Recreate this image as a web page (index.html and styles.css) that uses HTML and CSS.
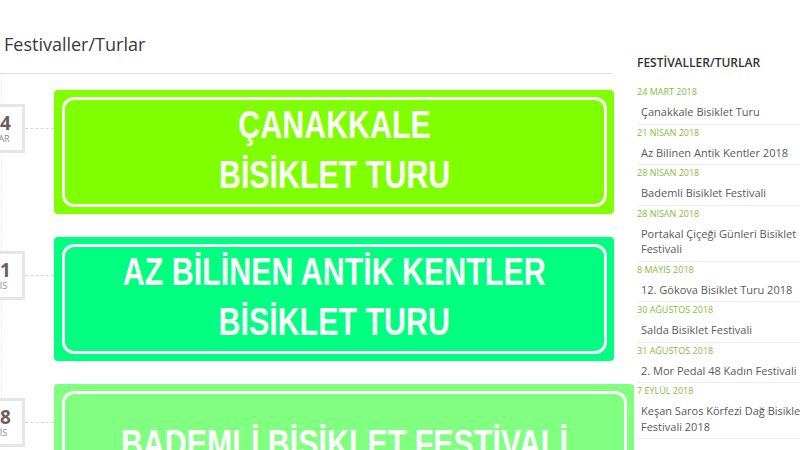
FILE: index.html
```html
<!DOCTYPE html>
<html lang="tr">
<head>
<meta charset="utf-8">
<title>Festivaller/Turlar</title>
<link rel="stylesheet" href="styles.css">
</head>
<body>
<div class="page">
  <main class="main">
    <h1 class="page-title">Festivaller/Turlar</h1>
    <div class="timeline">
      <div class="row">
        <div class="date"><span class="day">24</span><span class="mon">MAR</span></div>
        <div class="connector"></div>
        <div class="card card-lime"><div class="frame"><div class="label">ÇANAKKALE<br>BİSİKLET TURU</div></div></div>
      </div>
      <div class="row">
        <div class="date"><span class="day">21</span><span class="mon">NİS</span></div>
        <div class="connector"></div>
        <div class="card card-spring"><div class="frame"><div class="label">AZ BİLİNEN ANTİK KENTLER<br>BİSİKLET TURU</div></div></div>
      </div>
      <div class="row">
        <div class="date"><span class="day">28</span><span class="mon">NİS</span></div>
        <div class="connector"></div>
        <div class="card card-mint"><div class="frame"><div class="label">BADEMLİ BİSİKLET FESTİVALİ</div></div></div>
      </div>
    </div>
  </main>
  <aside class="sidebar">
    <h2 class="side-title">FESTİVALLER/TURLAR</h2>
    <ul class="events">
      <li class="event"><div class="ev-date">24 MART 2018</div><div class="ev-name">Çanakkale Bisiklet Turu</div></li>
      <li class="event"><div class="ev-date">21 NİSAN 2018</div><div class="ev-name">Az Bilinen Antik Kentler 2018</div></li>
      <li class="event"><div class="ev-date">28 NİSAN 2018</div><div class="ev-name">Bademli Bisiklet Festivali</div></li>
      <li class="event"><div class="ev-date">28 NİSAN 2018</div><div class="ev-name">Portakal Çiçeği Günleri Bisiklet Festivali</div></li>
      <li class="event"><div class="ev-date">8 MAYIS 2018</div><div class="ev-name">12. Gökova Bisiklet Turu 2018</div></li>
      <li class="event"><div class="ev-date">30 AĞUSTOS 2018</div><div class="ev-name">Salda Bisiklet Festivali</div></li>
      <li class="event"><div class="ev-date">31 AĞUSTOS 2018</div><div class="ev-name">2. Mor Pedal 48 Kadın Festivali</div></li>
      <li class="event"><div class="ev-date">7 EYLÜL 2018</div><div class="ev-name">Keşan Saros Körfezi Dağ Bisikleti Festivali 2018</div></li>
    </ul>
  </aside>
</div>
</body>
</html>
```

FILE: styles.css
```css
html, body {
  margin: 0;
  padding: 0;
  overflow: hidden;
  background: #fff;
}
body {
  font-family: "Open Sans", "Noto Sans", sans-serif;
  color: #444;
}
.page {
  display: flex;
  align-items: flex-start;
  width: 840px;
}
.main {
  flex: none;
  width: 614px;
}
.page-title {
  margin: 0 2px 0 0;
  padding: 32px 0 17px 4px;
  font-size: 18px;
  line-height: 24px;
  font-weight: 400;
  color: #3a3a3a;
  border-bottom: 1px solid #dcdcdc;
}
.timeline {
  margin-left: 1px;
  border-left: 1px dashed #ececec;
  padding-top: 16px;
}
.row {
  display: flex;
  align-items: flex-start;
  margin-bottom: 23px;
}
.date {
  flex: none;
  box-sizing: border-box;
  width: 50px;
  height: 49px;
  margin-left: -27px;
  margin-top: 14px;
  border: 3px solid #e6e6e6;
  background: #fff;
  display: flex;
  flex-direction: column;
  align-items: center;
  padding-top: 6px;
}
.day {
  font-size: 19px;
  line-height: 20px;
  font-weight: 700;
  color: #6f5d5d;
}
.mon {
  font-size: 9px;
  line-height: 12px;
  color: #8f8a96;
}
.connector {
  flex: none;
  width: 29px;
  margin-top: 38px;
  border-top: 1px dashed #d8d8d8;
}
.card {
  flex: 1;
  height: 124px;
  box-sizing: border-box;
  padding: 7px 7px 7px 8px;
  border-radius: 4px;
}
.card-lime { background: #80ff00; }
.card-spring { background: #00ff80; }
.card-mint { background: #80ff80; }
.frame {
  box-sizing: border-box;
  height: 100%;
  border: 3px solid #fff;
  border-radius: 12px;
  display: flex;
  align-items: center;
  justify-content: center;
  padding-bottom: 4px;
}
.label {
  font-family: "Liberation Sans", Arial, sans-serif;
  font-weight: 700;
  font-size: 38px;
  line-height: 50px;
  color: #fff;
  text-align: center;
  white-space: nowrap;
  transform: scaleX(0.8);
}
.sidebar {
  flex: none;
  width: 180px;
  margin-left: 23px;
  padding-top: 55px;
}
.side-title {
  margin: 0 0 13px;
  font-size: 12px;
  line-height: 16px;
  font-weight: 600;
  color: #333;
}
.events {
  list-style: none;
  margin: 0;
  padding: 0;
  width: 170px;
}
.event {
  border-bottom: 1px solid #ececec;
  padding: 2px 0 4px;
}
.ev-date {
  font-size: 9px;
  line-height: 12px;
  color: #86bc3c;
  text-transform: uppercase;
}
.ev-name {
  padding: 6px 0 0 4px;
  font-size: 11px;
  line-height: 15.5px;
  color: #5a5a5a;
}
```
